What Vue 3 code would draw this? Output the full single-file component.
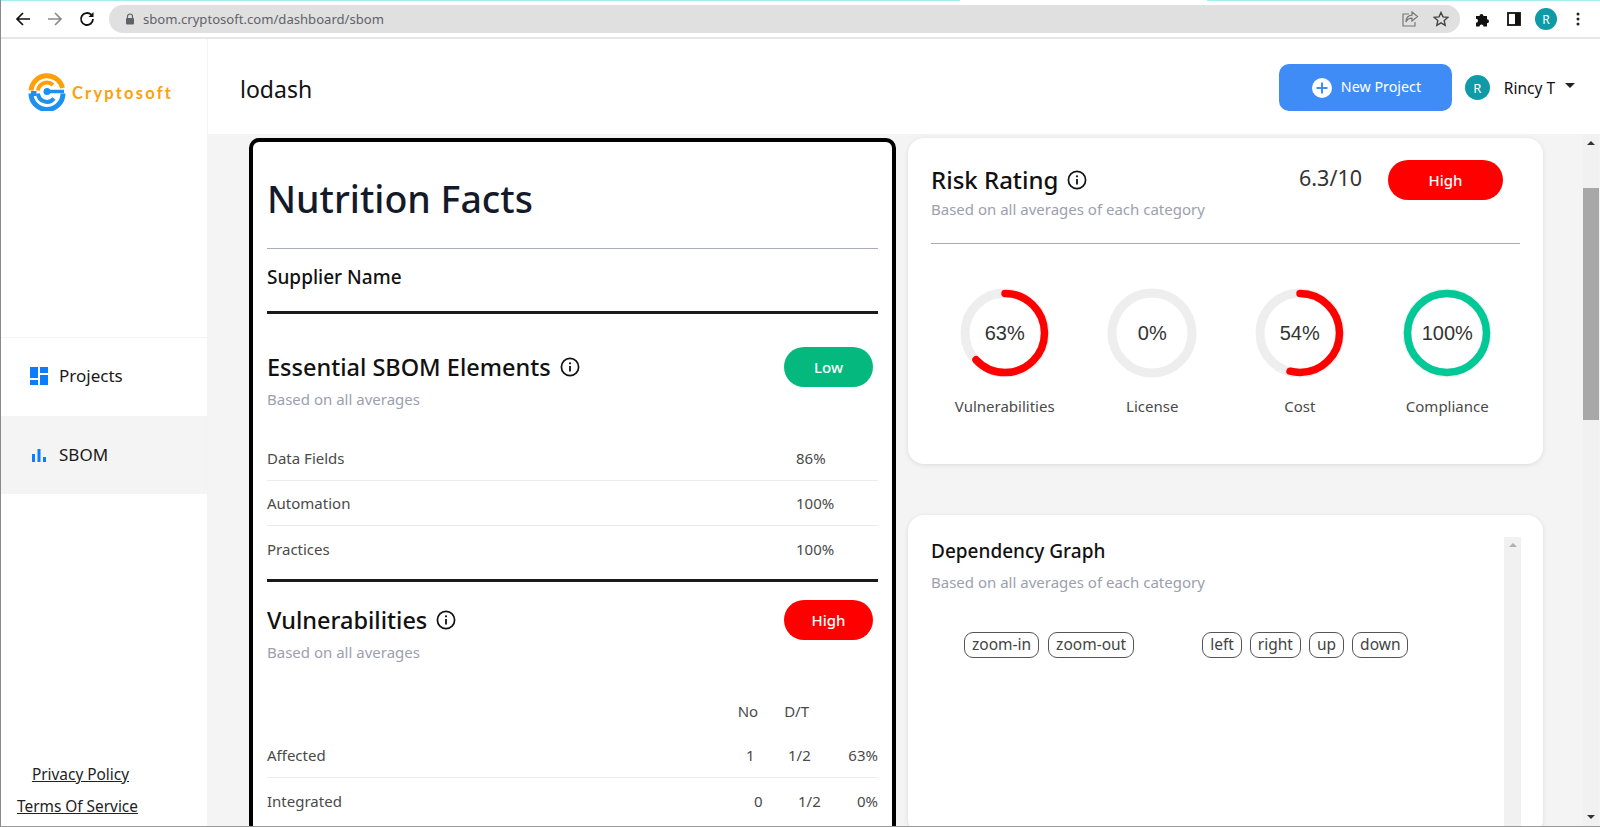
<script setup>
const essential = [
  { name: 'Data Fields', value: '86%' },
  { name: 'Automation', value: '100%' },
  { name: 'Practices', value: '100%' }
]
const vulns = [
  { name: 'Affected', no: '1', dt: '1/2', pct: '63%' },
  { name: 'Integrated', no: '0', dt: '1/2', pct: '0%' }
]
const rings = [
  { label: 'Vulnerabilities', value: 63, color: '#ff0000' },
  { label: 'License', value: 0, color: '#ff0000' },
  { label: 'Cost', value: 54, color: '#ff0000' },
  { label: 'Compliance', value: 100, color: '#00c896' }
]
const circ = 2 * Math.PI * 39.5
function dash(v) {
  return `${(circ * v) / 100} ${circ}`
}
</script>

<template>
  <div class="window">
    <div class="topline"><i class="first"></i><b></b><i></i></div>
    <div class="chrome">
      <div class="nav">
        <svg width="18" height="18" viewBox="0 0 18 18"><path d="M16 9H3M9 3L3 9l6 6" fill="none" stroke="#111" stroke-width="1.7"/></svg>
        <svg width="18" height="18" viewBox="0 0 18 18"><path d="M2 9h13M9 3l6 6-6 6" fill="none" stroke="#8a8a8a" stroke-width="1.7"/></svg>
        <svg width="18" height="18" viewBox="0 0 18 18"><path d="M15 9a6 6 0 1 1-1.8-4.3" fill="none" stroke="#111" stroke-width="1.8"/><path d="M15.5 2v5h-5z" fill="#111"/></svg>
      </div>
      <div class="omnibox">
        <svg width="10" height="12" viewBox="0 0 10 12"><path d="M2.5 5V3.500a2.500 2.500 0 0 1 5 0V5" fill="none" stroke="#5f6368" stroke-width="1.200"/><rect x="1" y="5" width="8" height="6.500" rx="1" fill="#5f6368"/></svg>
        <span class="url">sbom.cryptosoft.com/dashboard/sbom</span>
        <svg class="share" width="18" height="16" viewBox="0 0 18 16"><path d="M8 3H2v12h12v-4" fill="none" stroke="#777" stroke-width="1.200"/><path d="M11 1l5.500 4.500L11 10V7.200C8 7.200 6 8.500 5 11c0-4 2-6.500 6-6.800z" fill="none" stroke="#777" stroke-width="1.200"/></svg>
        <svg class="star" width="16" height="16" viewBox="0 0 16 16"><path d="M8 1.500l2 4.400 4.800.5-3.600 3.200 1 4.700L8 11.900l-4.200 2.400 1-4.700L1.200 6.400 6 5.900z" fill="none" stroke="#444" stroke-width="1.400"/></svg>
      </div>
      <div class="tools">
        <svg class="puzzle" width="16" height="16" viewBox="0 0 16 16"><path d="M1 5h3.500a2 2 0 1 1 4 0H12v3.200a2 2 0 1 1 0 4V15.500H8.500a2 2 0 1 0-4 0H1v-3.700a2 2 0 1 0 0-4z" fill="#111"/></svg>
        <svg class="panel" width="14" height="14" viewBox="0 0 14 14"><rect x="1" y="1" width="12" height="12" fill="none" stroke="#111" stroke-width="1.800"/><rect x="8" y="1" width="5" height="12" fill="#111"/></svg>
        <span class="chrome-avatar">R</span>
        <svg width="4" height="14" viewBox="0 0 4 14"><circle cx="2" cy="2" r="1.500" fill="#222"/><circle cx="2" cy="7" r="1.500" fill="#222"/><circle cx="2" cy="12" r="1.500" fill="#222"/></svg>
      </div>
    </div>

    <div class="app">
      <aside class="sidebar">
        <div class="logo">
          <svg width="38" height="38" viewBox="0 0 38 38">
            <path d="M3 17.500A16 16 0 0 1 34.500 15" fill="none" stroke="#ff9f0a" stroke-width="5"/>
            <path d="M10 17.500a9 9 0 0 1 15-5.500" fill="none" stroke="#ff9f0a" stroke-width="4"/>
            <path d="M3 20.500h5.500M3 20.500A16 16 0 0 0 35 20.500" fill="none" stroke="#1e90f0" stroke-width="5"/>
            <path d="M10 20.500a9 9 0 0 0 16 5" fill="none" stroke="#1e90f0" stroke-width="4"/>
            <path d="M19 18.500h17" stroke="#1e90f0" stroke-width="3.500"/>
            <circle cx="19" cy="18.500" r="3.500" fill="#1e90f0"/>
          </svg>
          <span class="logo-text">Cryptosoft</span>
        </div>
        <nav class="side-nav">
          <a class="side-item">
            <svg width="18" height="18" viewBox="0 0 18 18"><path d="M0 0h8v11H0zM10 0h8v6h-8zM0 13h8v5H0zM10 8h8v10h-8z" fill="#0d7dff"/></svg>
            Projects
          </a>
          <a class="side-item active">
            <svg width="18" height="18" viewBox="0 0 18 18"><path d="M2 8h3v8H2zM7.500 3h3v13h-3zM13 11h3v5h-3z" fill="#0d7dff"/></svg>
            SBOM
          </a>
        </nav>
        <div class="legal">
          <a class="privacy">Privacy Policy</a>
          <a>Terms Of Service</a>
        </div>
      </aside>

      <div class="page">
        <header class="topbar">
          <h1>lodash</h1>
          <button class="new-btn">
            <svg width="20" height="20" viewBox="0 0 20 20"><circle cx="10" cy="10" r="10" fill="#fff"/><path d="M10 4.500v11M4.500 10h11" stroke="#3f8cf7" stroke-width="2"/></svg>
            New Project
          </button>
          <span class="avatar">R</span>
          <span class="user">Rincy T</span>
          <span class="caret"></span>
        </header>

        <div class="scroller">
          <main class="content">
            <section class="facts">
              <h2 class="facts-title">Nutrition Facts</h2>
              <div class="supplier">Supplier Name</div>

              <div class="block-head">
                <div>
                  <h3>Essential SBOM Elements
                    <svg class="info" width="20" height="20" viewBox="0 0 20 20"><circle cx="10" cy="10" r="8.600" fill="none" stroke="#111" stroke-width="1.700"/><circle cx="10" cy="6.300" r="1.100" fill="#111"/><path d="M10 9v5.500" stroke="#111" stroke-width="1.800"/></svg>
                  </h3>
                  <p class="muted">Based on all averages</p>
                </div>
                <span class="pill low">Low</span>
              </div>
              <div class="rows">
                <div v-for="r in essential" :key="r.name" class="row">
                  <span>{{ r.name }}</span>
                  <span>{{ r.value }}</span>
                </div>
              </div>

              <div class="block-head second">
                <div>
                  <h3>Vulnerabilities
                    <svg class="info" width="20" height="20" viewBox="0 0 20 20"><circle cx="10" cy="10" r="8.600" fill="none" stroke="#111" stroke-width="1.700"/><circle cx="10" cy="6.300" r="1.100" fill="#111"/><path d="M10 9v5.500" stroke="#111" stroke-width="1.800"/></svg>
                  </h3>
                  <p class="muted">Based on all averages</p>
                </div>
                <span class="pill high">High</span>
              </div>
              <div class="vuln-head">
                <span>No</span>
                <span>D/T</span>
              </div>
              <div v-for="(v, i) in vulns" :key="v.name" class="vrow" :class="{ alt: i === 1 }">
                <span class="vname">{{ v.name }}</span>
                <span class="vno">{{ v.no }}</span>
                <span class="vdt">{{ v.dt }}</span>
                <span class="vpct">{{ v.pct }}</span>
              </div>
            </section>

            <div class="side-col">
              <section class="card risk">
                <div class="risk-head">
                  <div>
                    <h3>Risk Rating
                      <svg class="info" width="20" height="20" viewBox="0 0 20 20"><circle cx="10" cy="10" r="8.600" fill="none" stroke="#111" stroke-width="1.700"/><circle cx="10" cy="6.300" r="1.100" fill="#111"/><path d="M10 9v5.500" stroke="#111" stroke-width="1.800"/></svg>
                    </h3>
                    <p class="muted">Based on all averages of each category</p>
                  </div>
                  <span class="score">6.3/10</span>
                  <span class="pill high wide">High</span>
                </div>
                <div class="rings">
                  <div v-for="r in rings" :key="r.label" class="ring">
                    <div class="ring-box">
                      <svg width="90" height="90" viewBox="0 0 90 90">
                        <circle cx="45" cy="45" r="40" fill="none" stroke="#eeeeee" stroke-width="9"/>
                        <circle v-if="r.value" cx="45" cy="45" r="39.500" fill="none" :stroke="r.color" stroke-width="7.500" stroke-linecap="round" :stroke-dasharray="dash(r.value)" transform="rotate(-90 45 45)"/>
                      </svg>
                      <span class="ring-val">{{ r.value }}%</span>
                    </div>
                    <div class="ring-label">{{ r.label }}</div>
                  </div>
                </div>
              </section>

              <section class="card graph">
                <div class="graph-inner">
                  <h4>Dependency Graph</h4>
                  <p class="muted">Based on all averages of each category</p>
                  <div class="graph-btns">
                    <div class="btn-group">
                      <span class="gbtn">zoom-in</span>
                      <span class="gbtn">zoom-out</span>
                    </div>
                    <div class="btn-group tight">
                      <span class="gbtn">left</span>
                      <span class="gbtn">right</span>
                      <span class="gbtn">up</span>
                      <span class="gbtn">down</span>
                    </div>
                  </div>
                </div>
                <div class="inner-track"><i class="tri up"></i></div>
              </section>
            </div>
          </main>
          <div class="track">
            <i class="tri up dark"></i>
            <div class="thumb"></div>
            <i class="tri down dark"></i>
          </div>
        </div>
      </div>
    </div>
  </div>
</template>

<style>
html, body {
  margin: 0;
  height: 100%;
  overflow: hidden;
  background: #fff;
}
</style>

<style scoped>
* {
  box-sizing: border-box;
}
.window {
  width: 1600px;
  height: 827px;
  display: flex;
  flex-direction: column;
  overflow: hidden;
  font-family: "Noto Sans", "Open Sans", sans-serif;
  color: #111;
  border-left: 1px solid #8a8a8a;
  border-bottom: 1px solid #9a9a9a;
}
.topline {
  height: 1px;
  flex: none;
  display: flex;
}
.topline i {
  flex: 1;
  background: #a4eef2;
}
.topline i.first {
  flex: none;
  width: 959px;
}
.topline b {
  width: 247px;
}
.chrome {
  height: 38px;
  flex: none;
  display: flex;
  align-items: center;
  border-bottom: 2px solid #e6e6e6;
}
.nav {
  display: flex;
  gap: 14px;
  padding-left: 13px;
  width: 108px;
}
.omnibox {
  width: 1351px;
  height: 28px;
  border-radius: 14px;
  background: #e0e0e0;
  display: flex;
  align-items: center;
  padding-left: 16px;
}
.url {
  margin-left: 8px;
  font-size: 13.1px;
  color: #5f6368;
  flex: 1;
}
.share {
  margin-right: 14px;
}
.star {
  margin-right: 11px;
}
.tools {
  display: flex;
  align-items: center;
  padding-left: 15px;
}
.puzzle {
  margin-right: 16px;
}
.panel {
  margin-right: 14px;
}
.chrome-avatar {
  width: 22px;
  height: 22px;
  border-radius: 50%;
  background: #0e9aa7;
  color: #fff;
  font-size: 12px;
  display: flex;
  align-items: center;
  justify-content: center;
  margin-right: 19px;
}
.app {
  flex: 1;
  display: flex;
  min-height: 0;
}
.sidebar {
  width: 207px;
  flex: none;
  display: flex;
  flex-direction: column;
  border-right: 1px solid #f3f3f3;
}
.logo {
  height: 298px;
  padding: 34px 0 0 27px;
  display: flex;
  align-items: flex-start;
  gap: 6px;
  flex: none;
}
.logo-text {
  color: #ff9f0a;
  font-family: "Lato", sans-serif;
  font-size: 16.5px;
  font-weight: 700;
  letter-spacing: 2.2px;
  line-height: 38px;
  margin-top: 1px;
}
.side-nav {
  border-top: 1px solid #f5f5f5;
}
.side-item {
  height: 78px;
  display: flex;
  align-items: center;
  gap: 11px;
  padding: 0 0 3px 29px;
  font-size: 17px;
  color: #1a1a1a;
}
.side-item.active {
  background: #f4f4f4;
  padding-bottom: 1px;
}
.legal {
  margin-top: auto;
  align-self: flex-start;
  margin-left: 16px;
  display: flex;
  flex-direction: column;
  align-items: center;
  gap: 11px;
  padding-bottom: 9px;
  font-size: 15.4px;
  color: #222;
}
.legal a {
  text-decoration: underline;
}
.legal .privacy {
  margin-left: 6px;
}
.page {
  flex: 1;
  min-width: 0;
  display: flex;
  flex-direction: column;
}
.topbar {
  height: 95px;
  flex: none;
  display: flex;
  align-items: center;
  padding: 2px 0 0 32px;
}
.topbar h1 {
  margin: 2px auto 0 0;
  font-size: 23px;
  font-weight: 400;
}
.new-btn {
  width: 173px;
  height: 47px;
  border: 0;
  border-radius: 10px;
  background: #3f8cf7;
  color: #fff;
  font: inherit;
  font-size: 14.3px;
  display: flex;
  align-items: center;
  gap: 9px;
  padding: 0 0 2px 33px;
  margin-right: 13px;
}
.new-btn svg {
  margin-top: 2px;
}
.avatar {
  width: 25px;
  height: 25px;
  border-radius: 50%;
  background: #0e9aa7;
  color: #fff;
  font-size: 13px;
  display: flex;
  align-items: center;
  justify-content: center;
  margin-right: 14px;
}
.user {
  font-size: 15.500px;
  margin-right: 10px;
}
.caret {
  width: 0;
  height: 0;
  border-left: 5px solid transparent;
  border-right: 5px solid transparent;
  border-top: 5px solid #222;
  margin-right: 25px;
  margin-bottom: 4px;
}
.scroller {
  flex: 1;
  min-height: 0;
  display: flex;
  background: #f4f4f4;
  overflow: hidden;
}
.content {
  flex: 1;
  min-width: 0;
  display: flex;
  align-items: flex-start;
  gap: 12px;
  padding: 4px 0 0 41px;
}
.facts {
  width: 647px;
  flex: none;
  height: 760px;
  background: #fff;
  border: 4px solid #000;
  border-radius: 10px;
  padding: 1px 14px 0;
}
.facts-title {
  margin: 0;
  height: 106px;
  padding-top: 30px;
  font-size: 37.5px;
  font-weight: 500;
  line-height: 52px;
  color: #151a2b;
  border-bottom: 1px solid #a9adbb;
}
.supplier {
  height: 65px;
  line-height: 56px;
  font-size: 19px;
  font-weight: 500;
  border-bottom: 3px solid #1a1a1a;
}
.block-head {
  display: flex;
  justify-content: space-between;
  padding: 33px 5px 0 0;
}
.block-head.second {
  padding-top: 18px;
  border-top: 3px solid #1a1a1a;
  margin-top: 8px;
}
h3 {
  margin: 0;
  font-size: 23.5px;
  font-weight: 500;
  line-height: 40px;
  display: flex;
  align-items: center;
  gap: 9px;
}
.muted {
  margin: 0;
  font-size: 15px;
  color: #9ca0ae;
  line-height: 24px;
}
.pill {
  width: 89px;
  height: 40px;
  border-radius: 20px;
  color: #fff;
  font-size: 15px;
  font-weight: 500;
  display: flex;
  align-items: center;
  justify-content: center;
}
.pill.low {
  background: #05b97e;
}
.pill.high {
  background: #ff0000;
}
.pill.wide {
  width: 115px;
}
.rows {
  margin-top: 25px;
}
.row {
  height: 45px;
  display: grid;
  grid-template-columns: 529px 1fr;
  align-items: center;
  font-size: 15px;
  color: #4a4a4a;
  border-bottom: 1px solid #ececec;
}
.row:last-child {
  border-bottom: 0;
}
.vuln-head {
  display: flex;
  justify-content: flex-end;
  gap: 26px;
  font-size: 15px;
  color: #4a4a4a;
  padding: 37px 69px 0 0;
  height: 69px;
}
.vrow {
  height: 45px;
  display: flex;
  align-items: center;
  font-size: 15px;
  color: #4a4a4a;
  border-bottom: 1px solid #ececec;
}
.vrow.alt {
  border-bottom: 0;
}
.vname {
  margin-right: auto;
}
.vno {
  width: 22px;
  margin-left: 2px;
}
.vdt {
  margin-left: 20px;
  width: 23px;
}
.vpct {
  margin-left: 35px;
  width: 32px;
  text-align: right;
}
.vrow.alt .vno {
  width: 9px;
}
.vrow.alt .vdt {
  margin-left: 35px;
}
.vrow.alt .vpct {
  width: 22px;
}
.side-col {
  width: 635px;
  flex: none;
  display: flex;
  flex-direction: column;
  gap: 51px;
}
.card {
  background: #fff;
  border-radius: 16px;
  box-shadow: 0 1px 5px rgba(0, 0, 0, 0.1);
}
.risk {
  height: 326px;
  padding: 0 23px;
}
.risk-head {
  height: 106px;
  display: flex;
  align-items: flex-start;
  padding-top: 22px;
  border-bottom: 1px solid #a9a9bc;
}
.risk-head > div {
  margin-right: auto;
  padding-top: 3px;
}
.risk-head h3 {
  line-height: 34px;
  font-size: 24px;
}
.score {
  font-size: 21.5px;
  color: #333;
  line-height: 36px;
  margin-right: 26px;
}
.risk-head .pill {
  margin-right: 17px;
}
.rings {
  display: flex;
  padding-top: 44px;
}
.ring {
  width: 147.500px;
  flex: none;
  display: flex;
  flex-direction: column;
  align-items: center;
}
.ring-box {
  position: relative;
  width: 90px;
  height: 90px;
}
.ring-val {
  position: absolute;
  inset: 0;
  display: flex;
  align-items: center;
  justify-content: center;
  font-family: "Liberation Sans", Arial, sans-serif;
  font-size: 20px;
  color: #333;
}
.ring-label {
  margin-top: 18px;
  font-size: 15px;
  color: #4a4a4a;
}
.graph {
  height: 320px;
  display: flex;
  padding: 22px 22px 0 23px;
}
.graph-inner {
  flex: 1;
  padding-top: 1px;
}
h4 {
  margin: 0;
  font-size: 19px;
  font-weight: 500;
  line-height: 26px;
}
.graph .muted {
  margin-top: 6px;
}
.graph-btns {
  display: flex;
  gap: 68px;
  padding: 38px 0 0 33px;
}
.btn-group {
  display: flex;
  gap: 9px;
}
.btn-group.tight {
  gap: 8px;
}
.gbtn {
  height: 26px;
  padding: 0 7px;
  border: 1px solid #555;
  border-radius: 9px;
  font-size: 15.5px;
  line-height: 23px;
  color: #444;
}
.inner-track {
  width: 17px;
  background: #f1f1f1;
  padding-top: 6px;
  display: flex;
  justify-content: center;
  align-items: flex-start;
}
.track {
  width: 16px;
  margin-right: 1px;
  flex: none;
  background: #f1f1f1;
  display: flex;
  flex-direction: column;
  align-items: center;
  padding: 7px 0;
}
.thumb {
  width: 100%;
  height: 232px;
  background: #a8a8a8;
  margin: 43px 0 auto;
}
.tri {
  width: 0;
  height: 0;
  border-left: 4px solid transparent;
  border-right: 4px solid transparent;
  display: block;
}
.tri.up {
  border-bottom: 4px solid #b0b0b0;
}
.tri.down {
  border-top: 4px solid #b0b0b0;
}
.tri.up.dark {
  border-bottom-color: #333;
}
.tri.down.dark {
  border-top-color: #333;
}
</style>
